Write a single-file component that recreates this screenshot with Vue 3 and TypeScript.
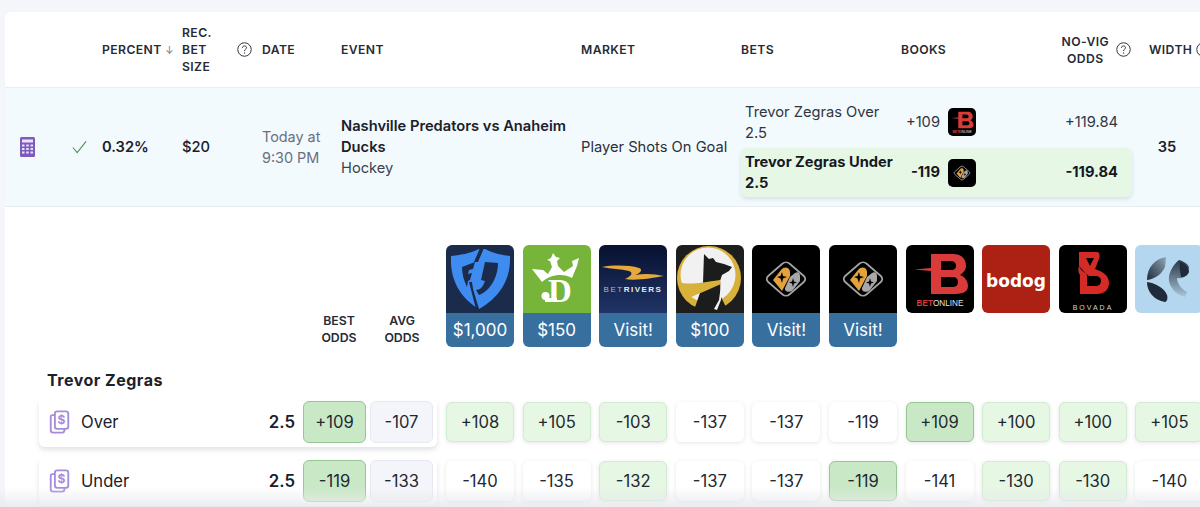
<script setup lang="ts">
interface Book { id: string; promo?: string }
interface OddsCell { v: string; k: '' | 'good' | 'best' }
interface Line { name: string; best: string; avg: string; cells: OddsCell[] }

const books: Book[] = [
  { id: 'fanduel', promo: '$1,000' },
  { id: 'draftkings', promo: '$150' },
  { id: 'betrivers', promo: 'Visit!' },
  { id: 'dog', promo: '$100' },
  { id: 'diamond', promo: 'Visit!' },
  { id: 'diamond', promo: 'Visit!' },
  { id: 'betonline' },
  { id: 'bodog' },
  { id: 'bovada' },
  { id: 'petal' }
]

const lines: Line[] = [
  {
    name: 'Over', best: '+109', avg: '-107',
    cells: [
      { v: '+108', k: 'good' }, { v: '+105', k: 'good' }, { v: '-103', k: 'good' },
      { v: '-137', k: '' }, { v: '-137', k: '' }, { v: '-119', k: '' },
      { v: '+109', k: 'best' }, { v: '+100', k: 'good' }, { v: '+100', k: 'good' }, { v: '+105', k: 'good' }
    ]
  },
  {
    name: 'Under', best: '-119', avg: '-133',
    cells: [
      { v: '-140', k: '' }, { v: '-135', k: '' }, { v: '-132', k: 'good' },
      { v: '-137', k: '' }, { v: '-137', k: '' }, { v: '-119', k: 'best' },
      { v: '-141', k: '' }, { v: '-130', k: 'good' }, { v: '-130', k: 'good' }, { v: '-140', k: '' }
    ]
  }
]
</script>

<template>
  <div class="page">
    <svg class="defs" width="0" height="0" aria-hidden="true">
      <defs>
        <linearGradient id="riverBg" x1="0" y1="0" x2="0" y2="1">
          <stop offset="0" stop-color="#081230" />
          <stop offset="1" stop-color="#1f3466" />
        </linearGradient>
        <linearGradient id="petalA" x1="1" y1="0" x2="0" y2="1">
          <stop offset="0" stop-color="#8fa6b8" />
          <stop offset="1" stop-color="#1f2b3a" />
        </linearGradient>
        <linearGradient id="petalB" x1="0" y1="0" x2="0" y2="1">
          <stop offset="0" stop-color="#2a3646" />
          <stop offset="1" stop-color="#a9c6da" />
        </linearGradient>
        <symbol id="help-icon" viewBox="0 0 16 16">
          <circle cx="8" cy="8" r="7.200" fill="none" stroke="currentColor" />
          <path d="M5.800 6.200C5.800 4.900 6.900 4.200 8 4.200C9.300 4.200 10.200 5 10.200 6.100C10.200 7.700 8 7.600 8 9.600" fill="none" stroke="currentColor" />
          <circle cx="8" cy="11.600" r=".7" fill="currentColor" />
        </symbol>
        <symbol id="fanduel" viewBox="0 0 68 68">
          <rect width="68" height="68" fill="#1a2b4b" />
          <path d="M5 11C15 10 25 8 33 4L39 4C47 8 55 10 64 11C65 34 54 52 33 64C13 52 4 34 5 11Z" fill="#3f8cf0" />
          <path d="M34 3L38 3L32 17L28 17Z" fill="#1a2b4b" />
          <path d="M16 22L29 17L27 24L23 25L22 29L26 28L24 35L22 36L21 42C18 36 16 29 16 22Z" fill="#1a2b4b" />
          <path d="M23 37L26 37L27 44L33 64L30 64Z" fill="#1a2b4b" />
          <path d="M39 17L52 18C52 28 48 38 42 44C39 47 36 49 33 50L30 45C34 45 37 42 39 36L35 35Z" fill="#1a2b4b" />
        </symbol>
        <symbol id="draftkings" viewBox="0 0 68 68">
          <rect width="68" height="68" fill="#76b539" />
          <path d="M9 24L20 25L25 29L29 22L27 16L24 15L28 13L30 8L33 12L37 13L34 16L35 21L41 27L50 21L49 16L56 13L54 21L49 33C41 28 27 29 19 37Z" fill="#fff" />
          <text x="37" y="57" class="dk">D</text>
          <circle cx="22.500" cy="51" r="4" fill="#fff" />
          <rect x="22" y="53" width="12" height="4" fill="#fff" />
        </symbol>
        <symbol id="betrivers" viewBox="0 0 68 68">
          <rect width="68" height="68" fill="url(#riverBg)" />
          <path d="M3 22C14 20 30 20 40 23C44 24 42 28 36 30C46 28 56 29 65 31C54 33 36 36 26 34C32 31 35 28 30 26C22 24 12 24 3 22Z" fill="#e5a93c" />
          <text x="34" y="47" class="river"><tspan fill="#aeb6c6" font-weight="400">BET</tspan>RIVERS</text>
        </symbol>
        <symbol id="dog" viewBox="0 0 68 68">
          <rect width="68" height="68" fill="#1e1e1e" />
          <circle cx="33" cy="33" r="32" fill="#d8b13a" />
          <circle cx="32" cy="30" r="27.500" fill="#f1f1f1" />
          <path d="M28 9L33 14L37 13L40 17L48 19L56 22L53 26L46 30L44 36L45 52L50 62L47 68L17 68L25 45L27 38Z" fill="#1c1c1c" />
          <path d="M2 37C12 40 24 38 44 35L45 39L27 47C20 50 14 52 10 55C6 50 3 44 2 37Z" fill="#d8b13a" />
          <path d="M45 40L43 55L38 64L41 65L45 55Z" fill="#f1f1f1" />
        </symbol>
        <symbol id="diamond" viewBox="0 0 68 68">
          <rect width="68" height="68" fill="#000" />
          <rect x="-15" y="-15" width="30" height="30" rx="5" transform="translate(34 34) scale(1 .87) rotate(45)" fill="none" stroke="#a3a3a3" stroke-width="2" />
          <path d="M21 35L29 25C32 21 38 22 38 27L38 31L30 46Z" fill="#e4a23c" />
          <path d="M38 32L43 28C46 26 48 28 48 31L48 36L41 45C38 48 32 47 33 43Z" fill="#a8a8a8" />
          <path d="M30 27L31 31L35 32L31 33.500L30 38L28.500 33.500L25 32L28.500 31Z" fill="#000" />
          <path d="M41 33L42 36.500L45 37.500L42 38.500L41 42L40 38.500L37 37.500L40 36.500Z" fill="#000" />
        </symbol>
        <symbol id="betonline" viewBox="0 0 68 68">
          <rect width="68" height="68" rx="5" fill="#000" />
          <path d="M25 9H47C56 9 60 14 60 21C60 25 57 28 54 30C59 32 62 36 62 41C62 48 55 49 47 49H25V26L8 24.500L25 23ZM35 16V25H45C49 25 50 23 50 20.500C50 18 48 16 45 16ZM35 32V42H47C51 42 52 39 52 37C52 34 50 32 47 32Z" fill="#d93a3a" />
          <text x="34" y="61" class="bo"><tspan fill="#d93a3a" font-weight="700">BET</tspan>ONLINE</text>
        </symbol>
        <symbol id="bodog" viewBox="0 0 68 68">
          <rect width="68" height="68" fill="#ad2114" />
          <text x="34" y="42" class="bd">bodog</text>
        </symbol>
        <symbol id="bovada" viewBox="0 0 68 68">
          <rect width="68" height="68" fill="#000" />
          <path d="M20 7H38C41 7 41 11 40 14L36 24C45 27 50 31 50 38C50 45 45 49 38 49H21V30C19 27 19 24 20 21L28 30V41H36C40 41 42 39 42 36C42 33 40 31 36 31H30C26 28 20 24 20 20ZM27 13L31 21L35 13Z" fill="#d42b26" fill-rule="evenodd" />
          <text x="34" y="64.500" class="bv">BOVADA</text>
        </symbol>
        <symbol id="petal" viewBox="0 0 68 68">
          <rect width="68" height="68" fill="#b4d6ee" />
          <path d="M31 12C20 14 12 22 12 35C20 34 27 29 30 22Z" fill="url(#petalA)" />
          <path d="M12 37C19 38 29 42 32 50C33 53 32 57 30 57C19 55 12 47 12 37Z" fill="#1f2b3a" />
          <path d="M44 15C38 20 33 28 34 36C35 43 42 50 50 52L52 47C46 44 42 38 42 33C50 35 54 28 54 22C52 18 48 16 44 15Z" fill="url(#petalB)" />
          <path d="M45 17C50 18 54 23 54 27C53 30 50 32 46 32C45 26 44 22 45 17Z" fill="#1f2b3a" />
        </symbol>
      </defs>
    </svg>

    <main class="card">
      <header class="cols head">
        <span></span>
        <span class="th">PERCENT <i class="arrow">↓</i></span>
        <span class="th narrow">REC.<br />BET<br />SIZE</span>
        <span class="th date-th">
          <svg class="help help-left"><use href="#help-icon" /></svg>
          DATE
        </span>
        <span class="th">EVENT</span>
        <span class="th">MARKET</span>
        <span class="th">BETS</span>
        <span class="th">BOOKS</span>
        <span class="th novig">
          <span>NO-VIG<br />ODDS</span>
          <svg class="help"><use href="#help-icon" /></svg>
        </span>
        <span class="th width-th">WIDTH
          <svg class="help"><use href="#help-icon" /></svg>
        </span>
      </header>

      <section class="cols row">
        <div class="tools">
          <svg class="calc" viewBox="0 0 15 20">
            <rect width="15" height="20" rx="1.500" fill="#7d5bbe" />
            <rect x="2" y="2.500" width="11" height="3" fill="#e9e3f6" />
            <g fill="#e9e3f6">
              <rect x="2" y="7.500" width="2.500" height="2" /><rect x="6.250" y="7.500" width="2.500" height="2" /><rect x="10.500" y="7.500" width="2.500" height="2" />
              <rect x="2" y="11" width="2.500" height="2" /><rect x="6.250" y="11" width="2.500" height="2" /><rect x="10.500" y="11" width="2.500" height="2" />
              <rect x="2" y="14.500" width="2.500" height="2" /><rect x="6.250" y="14.500" width="2.500" height="2" /><rect x="10.500" y="14.500" width="2.500" height="2" />
            </g>
          </svg>
          <svg class="check" viewBox="0 0 16 14"><path d="M1 7.500L5.500 13L15 1" fill="none" stroke="#4f8a57" stroke-width="1.100" /></svg>
        </div>
        <strong class="pct">0.32%</strong>
        <span class="bet-size">$20</span>
        <span class="when">Today at<br />9:30 PM</span>
        <div class="event">
          <strong>Nashville Predators vs Anaheim Ducks</strong>
          <span>Hockey</span>
        </div>
        <span class="market">Player Shots On Goal</span>
        <div class="bets">
          <div class="bet first">
            <span class="bet-name">Trevor Zegras Over 2.5</span>
            <span class="bet-odds">+109</span>
            <svg class="mini"><use href="#betonline" /></svg>
            <span class="bet-novig">+119.84</span>
          </div>
          <div class="bet chosen">
            <span class="bet-name">Trevor Zegras Under 2.5</span>
            <span class="bet-odds">-119</span>
            <svg class="mini"><use href="#diamond" /></svg>
            <span class="bet-novig">-119.84</span>
          </div>
        </div>
        <strong class="width-val">35</strong>
      </section>

      <section class="detail">
        <div class="book-head">
          <div class="avg-labels">
            <span>BEST<br />ODDS</span>
            <span>AVG<br />ODDS</span>
          </div>
          <div class="logos">
            <div v-for="(b, i) in books" :key="i" class="logo" :class="{ plain: !b.promo }">
              <svg class="logo-art"><use :href="'#' + b.id" /></svg>
              <div v-if="b.promo" class="promo">{{ b.promo }}</div>
            </div>
          </div>
        </div>

        <h2 class="player">Trevor Zegras</h2>

        <div v-for="l in lines" :key="l.name" class="line">
          <div class="line-card">
            <svg class="bill" viewBox="0 0 22 26" fill="none" stroke="#a78bdc" stroke-width="2" stroke-linejoin="round">
              <rect x="6" y="1.500" width="14.500" height="19" rx="2.500" />
              <path d="M6 5.500H3.500C2.300 5.500 1.500 6.300 1.500 7.500V22C1.500 23.500 2.500 24.500 4 24.500H14C15.500 24.500 16.500 23.500 16.500 20.500" />
              <text x="13.200" y="15.500" class="dollar">$</text>
            </svg>
            <span class="line-name">{{ l.name }}</span>
            <strong class="line-num">2.5</strong>
            <span class="odd best head-odd">{{ l.best }}</span>
            <span class="odd avg head-odd">{{ l.avg }}</span>
          </div>
          <div class="cells">
            <span v-for="(c, i) in l.cells" :key="i" class="odd" :class="c.k">{{ c.v }}</span>
          </div>
        </div>
      </section>
    </main>
    <div class="fade"></div>
  </div>
</template>

<style scoped>
.page {
  position: relative;
  width: 1200px;
  height: 507px;
  overflow: hidden;
  padding: 12px 0 0 5px;
  box-sizing: border-box;
  background: #f5f6fa;
  font-family: Inter, "Liberation Sans", sans-serif;
  color: #1b202b;
}
.defs {
  position: absolute;
}
.card {
  width: 1240px;
  background: #fff;
  border-top-left-radius: 6px;
  overflow: hidden;
}
.cols {
  display: grid;
  grid-template-columns: 97px 80px 80px 79px 240px 160px 160px 160px 88px 1fr;
}
.head {
  height: 75px;
  align-items: center;
  border-bottom: 1px solid #e9ecf0;
  box-sizing: content-box;
}
.th {
  font-size: 12.200px;
  font-weight: 600;
  line-height: 17px;
  letter-spacing: 0.4px;
  color: #262b36;
  white-space: nowrap;
}
.arrow {
  font-style: normal;
  font-size: 10px;
  color: #777;
  font-weight: 400;
}
.date-th {
  display: flex;
  align-items: center;
  position: relative;
}
.help {
  width: 15px;
  height: 15px;
  flex: none;
}
.help-left {
  position: absolute;
  left: -25px;
  top: 1px;
}
.novig {
  display: flex;
  align-items: center;
  gap: 7px;
  justify-content: flex-end;
  padding-right: 18px;
  margin-left: -80px;
  text-align: center;
}
.width-th {
  display: flex;
  align-items: center;
  gap: 4px;
}
.row {
  height: 118px;
  align-items: center;
  background: #f2fafe;
  border-bottom: 1px solid #e9ecf0;
  font-size: 14.700px;
}
.tools {
  display: flex;
  align-items: center;
  padding-left: 15px;
}
.calc {
  width: 15px;
  height: 20px;
}
.check {
  width: 15px;
  height: 14px;
  margin-left: 37px;
}
.pct {
  font-weight: 600;
}
.bet-size {
  font-weight: 500;
}
.when {
  font-size: 14.400px;
  color: #697080;
  line-height: 21px;
}
.event {
  display: flex;
  flex-direction: column;
  line-height: 21px;
}
.event strong {
  font-weight: 600;
  width: 234px;
}
.event span {
  color: #3c4350;
}
.market {
  color: #2b303b;
  white-space: nowrap;
}
.bets {
  grid-column: 7 / span 3;
  width: 391px;
  display: flex;
  flex-direction: column;
  gap: 1px;
  margin-top: 2px;
}
.bet {
  display: flex;
  align-items: center;
  height: 48px;
  padding: 0 14px 0 4px;
  border-radius: 6px;
  line-height: 21px;
  color: #30353f;
}
.first {
  box-sizing: border-box;
  padding-bottom: 1px;
}
.first .mini {
  margin-bottom: 2px;
}
.bet-name {
  width: 152px;
  flex: none;
}
.bet-odds {
  width: 43px;
  flex: none;
  text-align: right;
}
.mini {
  width: 28px;
  height: 28px;
  margin-left: 8px;
  border-radius: 5px;
  flex: none;
}
.bet-novig {
  flex: 1;
  text-align: right;
}
.chosen {
  height: 49px;
  background: #e7f7e6;
  box-shadow: 0 2px 4px rgba(40, 60, 70, 0.14);
  font-weight: 700;
  color: #15181f;
}
.width-val {
  font-weight: 600;
  text-align: center;
  width: 36px;
  margin-left: -6px;
  padding-left: 6px;
}
.detail {
  padding: 38px 0 0 34px;
}
.book-head {
  display: flex;
  align-items: flex-end;
  height: 102px;
}
.avg-labels {
  display: grid;
  grid-template-columns: 63px 63px;
  margin-left: 268.500px;
  margin-right: 12.500px;
  text-align: center;
  font-size: 12.300px;
  font-weight: 600;
  line-height: 17px;
  color: #262b36;
  padding-bottom: 1px;
}
.logos {
  display: flex;
  gap: 8.600px;
  align-items: flex-start;
  height: 102px;
}
.logo {
  width: 68px;
  height: 102px;
  flex: none;
  border-radius: 6px;
  overflow: hidden;
}
.logo.plain {
  height: 68px;
}
.logo-art {
  display: block;
  width: 68px;
  height: 68px;
}
.promo {
  height: 34px;
  background: #37709f;
  color: #fff;
  font-size: 17px;
  line-height: 34px;
  text-align: center;
}
.player {
  margin: 23px 0 0 8px;
  font-size: 16px;
  line-height: 20px;
  font-weight: 700;
  letter-spacing: 0.5px;
  color: #1b202b;
}
.line {
  display: flex;
  margin-top: 11px;
  height: 47px;
}
.line + .line {
  margin-top: 12px;
}
.line-card {
  display: flex;
  align-items: flex-start;
  width: 398px;
  height: 46px;
  padding-left: 10px;
  box-sizing: border-box;
  border-radius: 0 0 6px 6px;
  box-shadow: 0 3px 5px rgba(30, 40, 60, 0.13);
}
.bill {
  width: 21px;
  height: 24px;
  margin-top: 9px;
}
.dollar {
  fill: #a78bdc;
  stroke: none;
  font-size: 13px;
  font-weight: 700;
  text-anchor: middle;
}
.line-name {
  margin-left: 11px;
  font-size: 16.600px;
  line-height: 42px;
  width: 182px;
}
.line-num {
  width: 32px;
  font-size: 16.800px;
  font-weight: 600;
  line-height: 42px;
  text-align: right;
}
.head-odd {
  margin-left: 8px;
}
.head-odd + .head-odd {
  margin-left: 4px;
}
.odd {
  display: flex;
  align-items: center;
  justify-content: center;
  width: 63px;
  height: 42px;
  box-sizing: border-box;
  border: 1px solid transparent;
  border-radius: 6px;
  font-size: 16.600px;
  color: #232833;
  background: #fff;
  flex: none;
}
.cells {
  display: flex;
  gap: 8.600px;
  margin-left: 9px;
}
.cells .odd {
  width: 68px;
  height: 40px;
  margin-top: 1px;
  box-shadow: 0 1px 4px rgba(30, 40, 60, 0.12);
}
.odd.good {
  background: #e6f7e4;
  border-color: #d2ecd1;
}
.odd.best {
  background: #c9e9c6;
  border-color: #98c596;
}
.odd.avg {
  background: #f4f5fa;
  border-color: #e8e9f0;
}
.fade {
  position: absolute;
  left: 0;
  right: 0;
  bottom: 0;
  height: 20px;
  background: linear-gradient(to bottom, rgba(235, 236, 238, 0), rgba(232, 233, 236, 0.85));
  pointer-events: none;
}
.dk {
  font-family: "Liberation Serif", serif;
  font-weight: 700;
  font-size: 33px;
  fill: #fff;
  text-anchor: middle;
}
.river {
  font-family: "Liberation Sans", sans-serif;
  font-size: 8px;
  font-weight: 700;
  letter-spacing: 1.500px;
  fill: #e8ebf2;
  text-anchor: middle;
}
.bo {
  font-family: "Liberation Sans", sans-serif;
  font-size: 8.200px;
  fill: #e5e5e5;
  text-anchor: middle;
}
.bd {
  font-family: "DejaVu Sans", sans-serif;
  font-size: 17px;
  font-weight: 700;
  fill: #fff;
  text-anchor: middle;
}
.bv {
  font-family: "Liberation Sans", sans-serif;
  font-size: 7px;
  letter-spacing: 2px;
  fill: #d5d5d5;
  text-anchor: middle;
}
</style>
